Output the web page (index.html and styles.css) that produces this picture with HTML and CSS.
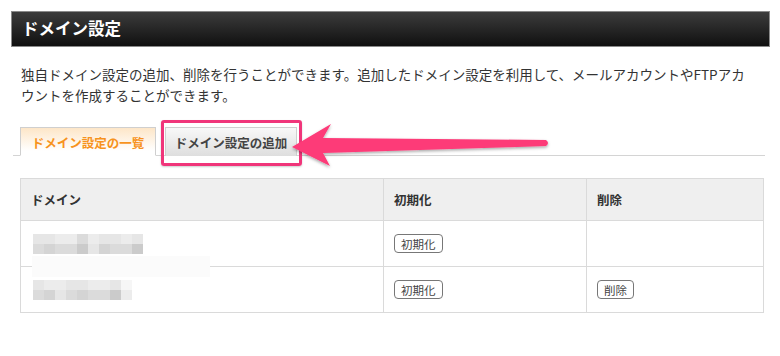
FILE: index.html
```html
<!DOCTYPE html>
<html>
<head>
    <meta charset="UTF-8">
    <meta name="viewport" content="width=device-width" />
    <title>ドメイン設定</title>
    <link rel="stylesheet" href="styles.css">
</head>
<body>
<div class="page">
    <h1 class="title">ドメイン設定</h1>

    <p class="lead">独自ドメイン設定の追加、削除を行うことができます。追加したドメイン設定を利用して、メールアカウントやFTPアカウントを作成することができます。</p>

    <div class="tabs">
        <div class="tab current">ドメイン設定の一覧</div>
        <div class="tab">ドメイン設定の追加</div>
    </div>

    <table class="domains">
        <thead>
            <tr>
                <th class="col-domain">ドメイン</th>
                <th class="col-init">初期化</th>
                <th class="col-del">削除</th>
            </tr>
        </thead>
        <tbody>
            <tr>
                <td>
                    <div class="mosaic">
                        <span class="s2"></span><span class="s2"></span><span class="s1"></span><span class="s1"></span><span class="s3"></span><span class="s1"></span><span class="s2"></span><span class="s2"></span><span class="s1"></span><span class="s2"></span>
                        <span class="s3"></span><span class="s4"></span><span class="s3"></span><span class="s3"></span><span class="s5"></span><span class="s2"></span><span class="s4"></span><span class="s3"></span><span class="s3"></span><span class="s5"></span>
                    </div>
                    <div class="smudge"></div>
                </td>
                <td><button class="btn">初期化</button></td>
                <td></td>
            </tr>
            <tr>
                <td>
                    <div class="mosaic short">
                        <span class="s2"></span><span class="s1"></span><span class="s1"></span><span class="s2"></span><span class="s2"></span><span class="s1"></span><span class="s1"></span><span class="s2"></span><span class="s0"></span>
                        <span class="s3"></span><span class="s4"></span><span class="s2"></span><span class="s3"></span><span class="s4"></span><span class="s3"></span><span class="s3"></span><span class="s5"></span><span class="s1"></span>
                    </div>
                </td>
                <td><button class="btn">初期化</button></td>
                <td><button class="btn">削除</button></td>
            </tr>
        </tbody>
    </table>
</div>

<div class="highlight"></div>

<svg class="arrow" viewBox="0 0 780 356" xmlns="http://www.w3.org/2000/svg">
    <defs>
        <filter id="shadow" x="-10%" y="-50%" width="120%" height="200%">
            <feDropShadow dx="0" dy="1.5" stdDeviation="1.5" flood-color="#000" flood-opacity="0.35" />
        </filter>
    </defs>
    <path filter="url(#shadow)" fill="#fd3a78"
          d="M292 147 L331 124 L323 138 L546 140 Q550 143 546 146 L323 153 L330 166 Z" />
</svg>
</body>
</html>
```

FILE: styles.css
```css
html {
    font-family: "Noto Sans CJK JP", "Noto Sans", sans-serif;
    box-sizing: border-box;
}

*,
*:before,
*:after {
    box-sizing: inherit;
}

body {
    margin: 0;
    width: 780px;
    height: 356px;
    overflow: hidden;
    background: #fff;
    color: #333;
    position: relative;
}

.page {
    padding: 11px 10px 0 11px;
}

.title {
    margin: 0;
    height: 36px;
    padding-left: 10px;
    border: 1px solid #8a8a8a;
    background: linear-gradient(#3c3c3c, #101010);
    color: #fff;
    font-size: 16.5px;
    font-weight: bold;
    line-height: 33px;
}

.lead {
    margin: 17px 0 0;
    padding: 0 10px;
    width: 752px;
    font-size: 13.5px;
    line-height: 21px;
    color: #333;
}

.tabs {
    display: flex;
    gap: 9px;
    margin: 21px 5px 0 2px;
    padding-left: 7px;
    border-bottom: 1px solid #d4d4d4;
}

.tab {
    width: 132px;
    height: 29px;
    margin-bottom: -1px;
    border: 1px solid #cfcfcf;
    border-bottom: none;
    background: linear-gradient(#f8f8f8, #dedede);
    font-size: 12.5px;
    font-weight: bold;
    line-height: 29px;
    text-align: center;
    color: #444;
}

.tab.current {
    width: 136px;
    background: linear-gradient(#fde6c8, #fff 85%);
    border-bottom: 1px solid #fff;
    color: #f7931e;
}

.domains {
    margin: 22px 6px 0 9px;
    width: 744px;
    border-collapse: collapse;
    font-size: 12px;
}

.domains th,
.domains td {
    border: 1px solid #dadada;
    text-align: left;
    vertical-align: middle;
    padding: 0 10px;
}

.domains th {
    height: 42px;
    background: #efefef;
    font-size: 12.5px;
    font-weight: bold;
    color: #333;
}

.domains td {
    height: 46px;
    position: relative;
}

.col-domain {
    width: 363px;
}

.col-init {
    width: 203px;
}

.btn {
    font-family: inherit;
    font-size: 11.5px;
    color: #444;
    background: #fff;
    border: 1px solid #777;
    border-radius: 4px;
    padding: 0 6px;
    height: 19px;
    line-height: 16px;
}

.mosaic {
    display: grid;
    grid-template-columns: repeat(10, 11px);
    grid-auto-rows: 10px;
    margin-left: 2px;
    filter: blur(0.6px);
}

.mosaic.short {
    grid-template-columns: repeat(9, 11px);
}

.s0 { background: #f6f6f6; }
.s1 { background: #ececec; }
.s2 { background: #e6e6e6; }
.s3 { background: #dbdbdb; }
.s4 { background: #d4d4d4; }
.s5 { background: #cbcbcb; }

.smudge {
    position: absolute;
    left: 11px;
    bottom: -11px;
    width: 178px;
    height: 21px;
    background: #fbfbfb;
    z-index: 1;
}

.highlight {
    position: absolute;
    left: 161px;
    top: 120px;
    width: 141px;
    height: 46px;
    border: 3px solid #f0357a;
    border-radius: 3px;
    box-shadow: 0 1px 2px rgba(0, 0, 0, 0.2);
}

.arrow {
    position: absolute;
    left: 0;
    top: 0;
    width: 780px;
    height: 356px;
    pointer-events: none;
}
```
